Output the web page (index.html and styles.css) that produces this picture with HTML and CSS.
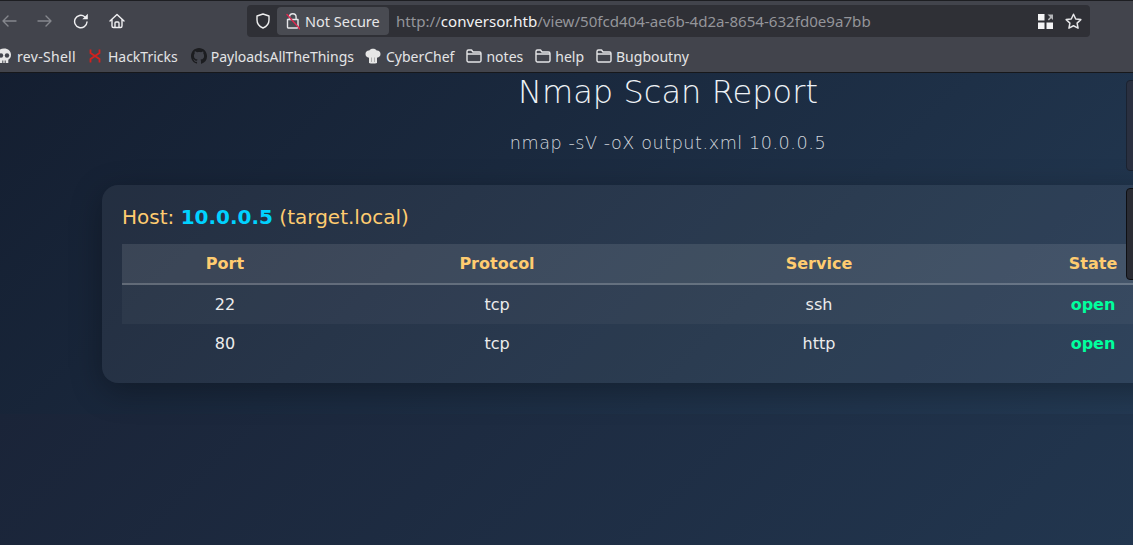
FILE: index.html
```html
<!DOCTYPE html>
<html lang="en">
<head>
<meta charset="utf-8">
<title>Nmap Scan Report</title>
<link rel="stylesheet" href="styles.css">
</head>
<body>
<header class="chrome">
  <div class="toolbar">
    <div class="nav">
      <svg class="ico back" viewBox="0 0 16 16"><path d="M15 8H2M7 3 2 8l5 5"/></svg>
      <svg class="ico fwd" viewBox="0 0 16 16"><path d="M1 8h13M9 3l5 5-5 5"/></svg>
      <svg class="ico reload" viewBox="0 0 16 16"><path d="M14 9a6.200 6.200 0 1 1-2.300-5.300"/><path class="solid" d="M14.800 .8v5.500H9.300z"/></svg>
      <svg class="ico home" viewBox="0 0 16 16"><path d="M1 8 8 1.500 15 8M3 6.500V13a1.500 1.500 0 0 0 1.500 1.500h7A1.500 1.500 0 0 0 13 13V6.500M6 14.500V10a1 1 0 0 1 1-1h2a1 1 0 0 1 1 1v4.500"/></svg>
    </div>
    <div class="urlbar">
      <svg class="ico shield" viewBox="0 0 16 16"><path d="M8 1 2 3v4c0 4 3 6.800 6 8 3-1.200 6-4 6-8V3z"/></svg>
      <div class="secure">
        <svg class="ico lock" viewBox="0 0 14 17"><path d="M1.500 6.500h10.500V14a1 1 0 0 1-1 1H2.500a1 1 0 0 1-1-1zM3.500 6.500V4a3.300 3.300 0 0 1 6.600 0v2.500"/><path class="slash" d="M1 1.500 14 16"/></svg>
        <span>Not Secure</span>
      </div>
      <div class="url">http://<b>conversor.htb</b>/view/50fcd404-ae6b-4d2a-8654-632fd0e9a7bb</div>
      <svg class="qr" viewBox="0 0 15 15"><rect x="0" y="0" width="6.500" height="6.500"/><rect x="0" y="8.500" width="6.500" height="6.500"/><rect x="8.500" y="8.500" width="6.500" height="6.500"/><path class="qr-dim" d="M9.500 .5H15v5.500l-1.800-1.800-2.300 2.300-1.100-1.100 2.300-2.300z"/></svg>
      <svg class="ico star" viewBox="0 0 16 16"><path d="M8 1.200l2.100 4.400 4.800.6-3.500 3.300.9 4.800L8 12l-4.300 2.300.9-4.800L1.100 6.200l4.800-.6z"/></svg>
    </div>
  </div>
  <nav class="bookmarks">
    <span class="bm bm-skull"><svg class="fav" viewBox="0 0 16 16"><path class="fill-light" d="M8 .5C3.800.5 1 3 1 6.800c0 2.400 1 4 2.700 4.900V15h8.600v-3.300C14 10.800 15 9.200 15 6.800 15 3 12.200.5 8 .5z"/><circle class="fill-dark" cx="5" cy="7.500" r="2.200"/><circle class="fill-dark" cx="11" cy="7.500" r="2.200"/><path class="fill-dark" d="M6.300 12.500h1V15h-1zM8.700 12.500h1V15h-1z"/></svg><span class="wide">rev-Shell</span></span>
    <span class="bm bm-ht"><svg class="fav" viewBox="0 0 16 16"><path class="red" d="M3.500 1.500v3.500l9 6v3.500M12.500 1.500v3.500l-9 6v3.500"/></svg>HackTricks</span>
    <span class="bm bm-gh"><svg class="fav" viewBox="0 0 16 16"><path class="fill-black" d="M8 0C3.580 0 0 3.580 0 8c0 3.540 2.290 6.530 5.470 7.590.4.070.55-.17.550-.38v-1.340c-2.230.48-2.700-1.070-2.700-1.070-.36-.93-.890-1.170-.890-1.170-.73-.5.050-.49.050-.49.800.06 1.230.83 1.230.83.710 1.220 1.870.87 2.330.66.070-.52.280-.870.510-1.070-1.780-.2-3.640-.89-3.640-3.950 0-.87.310-1.590.820-2.150-.08-.2-.360-1.020.080-2.120 0 0 .67-.21 2.200.82A7.600 7.600 0 0 1 8 4.040c.68 0 1.360.09 2 .27 1.530-1.040 2.200-.82 2.200-.82.440 1.100.160 1.920.080 2.120.51.560.820 1.270.820 2.150 0 3.070-1.870 3.750-3.650 3.950.290.250.540.730.540 1.480v2.190c0 .21.150.46.550.38A8 8 0 0 0 16 8c0-4.420-3.580-8-8-8z"/></svg>PayloadsAllTheThings</span>
    <span class="bm bm-chef"><svg class="fav" viewBox="0 0 16 16"><path class="fill-light" d="M4 15V9.800C1.800 9.500.5 8 .5 6c0-2.300 1.800-3.800 3.800-3.500C5 1.300 6.400.7 8 .7s3 .6 3.700 1.800c2-.3 3.800 1.200 3.800 3.500 0 2-1.300 3.500-3.500 3.800V15c-2.500.8-5.500.8-8 0z"/><path class="fold" d="M6.500 9.500V14M9.500 9.500V14"/></svg>CyberChef</span>
    <span class="bm bm-folder"><svg class="ico folder" viewBox="0 0 16 16"><path d="M1 12.500V3.500A1.500 1.500 0 0 1 2.500 2h3L7 4h6.500A1.500 1.500 0 0 1 15 5.500v7a1.500 1.500 0 0 1-1.500 1.500h-11A1.500 1.500 0 0 1 1 12.500zM1 6h14"/></svg>notes</span>
    <span class="bm bm-folder"><svg class="ico folder" viewBox="0 0 16 16"><path d="M1 12.500V3.500A1.500 1.500 0 0 1 2.500 2h3L7 4h6.500A1.500 1.500 0 0 1 15 5.500v7a1.500 1.500 0 0 1-1.500 1.500h-11A1.500 1.500 0 0 1 1 12.500zM1 6h14"/></svg>help</span>
    <span class="bm bm-folder"><svg class="ico folder" viewBox="0 0 16 16"><path d="M1 12.500V3.500A1.500 1.500 0 0 1 2.500 2h3L7 4h6.500A1.500 1.500 0 0 1 15 5.500v7a1.500 1.500 0 0 1-1.500 1.500h-11A1.500 1.500 0 0 1 1 12.500zM1 6h14"/></svg>Bugboutny</span>
  </nav>
</header>
<main class="page">
  <h1 class="title">Nmap Scan Report</h1>
  <p class="cmd">nmap -sV -oX output.xml 10.0.0.5</p>
  <section class="card">
    <h2 class="host">Host: <span class="ip">10.0.0.5</span> (target.local)</h2>
    <table class="ports">
      <colgroup><col class="c1"><col class="c2"><col class="c3"><col class="c4"></colgroup>
      <thead><tr><th>Port</th><th>Protocol</th><th>Service</th><th>State</th></tr></thead>
      <tbody>
        <tr><td>22</td><td>tcp</td><td>ssh</td><td class="open">open</td></tr>
        <tr><td>80</td><td>tcp</td><td>http</td><td class="open">open</td></tr>
      </tbody>
    </table>
  </section>
  <div class="edge edge-a"></div>
  <div class="edge edge-b"></div>
</main>
</body>
</html>
```
FILE: styles.css
```css
* { box-sizing: border-box; }
html, body { margin: 0; height: 100%; overflow: hidden; }
body {
  width: 1133px;
  height: 545px;
  display: flex;
  flex-direction: column;
  background: #141e30;
  font-family: "DejaVu Sans", sans-serif;
}
.chrome {
  flex: none;
  height: 73px;
  background: #42444c;
  border-top: 1px solid #1d1e22;
  border-bottom: 1px solid #17181b;
  font-family: "Noto Sans", sans-serif;
  color: #e8e8ea;
}
.toolbar {
  height: 40px;
  display: flex;
  align-items: center;
}
.ico { fill: none; stroke: currentColor; stroke-width: 1.400; stroke-linecap: round; stroke-linejoin: round; flex: none; }
.ico .solid { fill: currentColor; stroke: none; }
.nav { width: 247px; display: flex; align-items: center; flex: none; }
.nav .ico { width: 16px; height: 16px; }
.back { margin-left: 1px; color: #85878d; }
.fwd { margin-left: 20px; color: #85878d; }
.reload { margin-left: 20px; color: #f0f0f2; }
.home { margin-left: 20px; color: #f0f0f2; }
.urlbar {
  width: 843px;
  height: 32px;
  background: #2f3036;
  border-radius: 4px;
  display: flex;
  align-items: center;
  flex: none;
}
.shield { width: 16px; height: 16px; margin-left: 8px; color: #eeeeef; }
.secure {
  margin-left: 6px;
  height: 28px;
  width: 112px;
  background: #494b52;
  border-radius: 4px;
  display: flex;
  align-items: center;
  gap: 5px;
  padding-left: 9px;
  font-size: 14.500px;
  color: #e6e6e8;
  flex: none;
}
.lock { width: 14px; height: 17px; color: #e6e6e8; }
.lock .slash { stroke: #e0284f; }
.url {
  flex: 1;
  margin-left: 7px;
  font-size: 15.100px;
  color: #94959a;
  white-space: nowrap;
}
.url b { font-weight: 400; color: #f2f2f3; }
.qr { width: 15px; height: 15px; fill: #f4f4f5; flex: none; }
.qr .qr-dim { fill: #b4b5b8; }
.star { width: 17px; height: 17px; margin: 0 8px 0 12px; color: #e6e6e8; }
.bookmarks {
  height: 30px;
  display: flex;
  align-items: center;
  font-size: 14px;
  color: #e4e4e6;
  white-space: nowrap;
}
.bm { display: flex; align-items: center; gap: 5px; margin-left: 12px; }
.bm-skull { margin-left: -4px; }
.wide { letter-spacing: 0.300px; }
.bm-ht { margin-left: 11px; }
.bm-gh { gap: 4px; margin-left: 13px; }
.bm-chef { margin-left: 11px; }
.bm-folder { gap: 4px; }
.fav { width: 16px; height: 16px; flex: none; }
.fill-light { fill: #e6e6e6; }
.fill-dark { fill: #42444c; }
.fill-black { fill: #1c1d20; }
.fold { fill: none; stroke: #b0b0b0; stroke-width: 1; }
.red { fill: none; stroke: #d2211e; stroke-width: 1.800; }
.folder { width: 16px; height: 16px; color: #e4e4e6; }

.page {
  position: relative;
  flex: 1;
  overflow: hidden;
  padding-left: 102px;
  background:
    linear-gradient(135deg, #141e30, #243b55) 0 -19px / 1250px 360px no-repeat,
    linear-gradient(135deg, #1a2438, #243b55) 0 341px / 1250px 360px no-repeat;
}
.title {
  width: 1132px;
  margin: 0;
  text-align: center;
  font-size: 32px;
  line-height: 38px;
  font-weight: 200;
  letter-spacing: 0.050px;
  color: #eef2f6;
}
.cmd {
  width: 1132px;
  margin: 22px 0 0;
  text-align: center;
  font-size: 17.600px;
  line-height: 21px;
  font-weight: 200;
  letter-spacing: 0.560px;
  color: #d4d8de;
}
.card {
  width: 1132px;
  height: 198px;
  margin-top: 31px;
  padding: 20px;
  border-radius: 16px;
  background: rgba(255, 255, 255, 0.06);
  box-shadow: 0 8px 32px rgba(0, 0, 0, 0.3);
}
.host {
  margin: 0 0 15px;
  font-size: 20px;
  line-height: 24px;
  font-weight: 400;
  color: #ffcc70;
}
.ip { font-weight: 700; color: #00d2ff; }
.ports {
  width: 1092px;
  table-layout: fixed;
  border-collapse: separate;
  border-spacing: 0;
  font-size: 16px;
  color: #ececec;
}
.c1 { width: 206px; }
.c2 { width: 338px; }
.c3 { width: 306px; }
.c4 { width: 242px; }
.ports th {
  height: 41px;
  font-weight: 700;
  color: #ffcc70;
  background: rgba(255, 255, 255, 0.1);
  border-bottom: 2px solid rgba(255, 255, 255, 0.2);
  padding: 0;
}
.ports td { height: 39px; text-align: center; padding: 0; }
.ports tbody tr:nth-child(odd) { background: rgba(255, 255, 255, 0.04); }
.ports .open { font-weight: 700; color: #00ff9d; }
.edge {
  position: absolute;
  left: 1126px;
  width: 20px;
  border-radius: 4px;
}
.edge-a { top: 7px; height: 91px; background: #2a3040; border: 1px solid #1a2230; }
.edge-b { top: 115px; height: 92px; background: #2a2c34; border: 1px solid #0e0f13; }
```
